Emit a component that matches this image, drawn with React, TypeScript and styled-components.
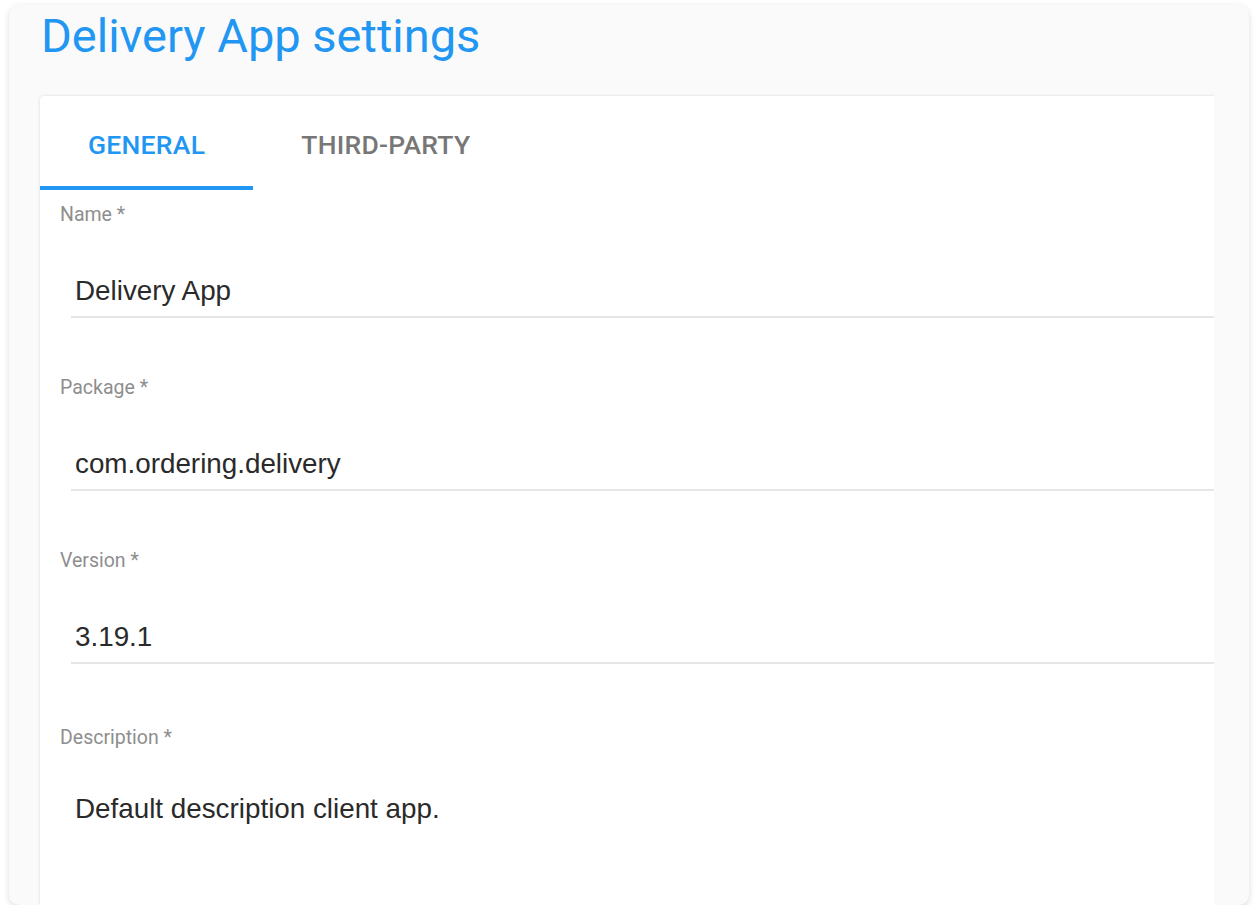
import styled, { createGlobalStyle } from 'styled-components';

const GlobalStyle = createGlobalStyle`
  html, body {
    margin: 0;
    padding: 0;
    background: #ffffff;
  }
  * {
    box-sizing: border-box;
  }
`;

const Frame = styled.div`
  margin: 5px 9px 0;
  height: 900px;
  display: flex;
  flex-direction: column;
  padding: 7px 35px 0 31px;
  background: #fafafa;
  border-radius: 10px;
  box-shadow: 0 2px 6px rgba(0, 0, 0, 0.14);
  overflow: hidden;
`;

const Title = styled.h1`
  margin: 0 0 0 1px;
  font-family: Roboto, 'Noto Sans', sans-serif;
  font-size: 47px;
  font-weight: 400;
  line-height: 47px;
  color: #2196f3;
`;

const Viewport = styled.div`
  flex: 1;
  min-height: 0;
  margin: 34px 0 0 -3px;
  padding: 3px 0 0 3px;
  overflow: hidden;
  display: flex;
`;

const Card = styled.div`
  flex: 1;
  background: #ffffff;
  border-radius: 4px 0 0 0;
  box-shadow: 0 0 3px rgba(0, 0, 0, 0.14);
`;

const TabBar = styled.div`
  display: flex;
  height: 94px;
`;

const Tab = styled.button<{ $active?: boolean }>`
  display: flex;
  align-items: center;
  height: 94px;
  padding: 6px 48px 0;
  border: none;
  border-bottom: 4px solid ${p => (p.$active ? '#2196f3' : 'transparent')};
  background: none;
  font-family: Roboto, 'Noto Sans', sans-serif;
  font-size: 26.5px;
  font-weight: 500;
  letter-spacing: 0.01em;
  text-transform: uppercase;
  color: ${p => (p.$active ? '#2196f3' : '#777777')};
  cursor: pointer;
`;

const Form = styled.div`
  display: flex;
  flex-direction: column;
  padding: 13px 0 0;
`;

const Field = styled.div<{ $gap?: number }>`
  display: flex;
  flex-direction: column;
  margin-top: ${p => p.$gap ?? 0}px;
`;

const Label = styled.label<{ $spacing?: number }>`
  display: block;
  margin: 0 0 ${p => p.$spacing ?? 48}px 20px;
  height: 24px;
  font-family: Roboto, 'Noto Sans', sans-serif;
  font-size: 19.5px;
  line-height: 24px;
  color: #8e8e8e;
`;

const InputWrap = styled.div<{ $underline?: boolean }>`
  margin-left: 31px;
  padding: 0 0 9px 4px;
  border-bottom: 2px solid ${p => (p.$underline === false ? 'transparent' : '#e6e6e6')};
`;

const Input = styled.input`
  display: block;
  width: 100%;
  height: 32px;
  padding: 0;
  border: none;
  outline: none;
  background: transparent;
  font-family: 'Liberation Sans', Arial, sans-serif;
  font-size: 27.8px;
  line-height: 32px;
  color: #2a2a2a;
`;

const TextArea = styled.textarea`
  display: block;
  width: 100%;
  height: 160px;
  padding: 0;
  border: none;
  outline: none;
  resize: none;
  background: transparent;
  font-family: 'Liberation Sans', Arial, sans-serif;
  font-size: 27.8px;
  line-height: 32px;
  color: #2a2a2a;
`;

const fields = [
  { label: 'Name', value: 'Delivery App' },
  { label: 'Package', value: 'com.ordering.delivery' },
  { label: 'Version', value: '3.19.1' },
];

export default function App() {
  return (
    <>
      <GlobalStyle />
      <Frame>
        <Title>Delivery App settings</Title>
        <Viewport>
          <Card>
            <TabBar>
              <Tab $active>General</Tab>
              <Tab>Third-party</Tab>
            </TabBar>
            <Form>
              {fields.map((f, i) => (
                <Field key={f.label} $gap={i === 0 ? 0 : 58}>
                  <Label>{f.label} *</Label>
                  <InputWrap>
                    <Input defaultValue={f.value} readOnly />
                  </InputWrap>
                </Field>
              ))}
              <Field $gap={62}>
                <Label $spacing={43}>Description *</Label>
                <InputWrap $underline={false}>
                  <TextArea defaultValue="Default description client app." readOnly />
                </InputWrap>
              </Field>
            </Form>
          </Card>
        </Viewport>
      </Frame>
    </>
  );
}
